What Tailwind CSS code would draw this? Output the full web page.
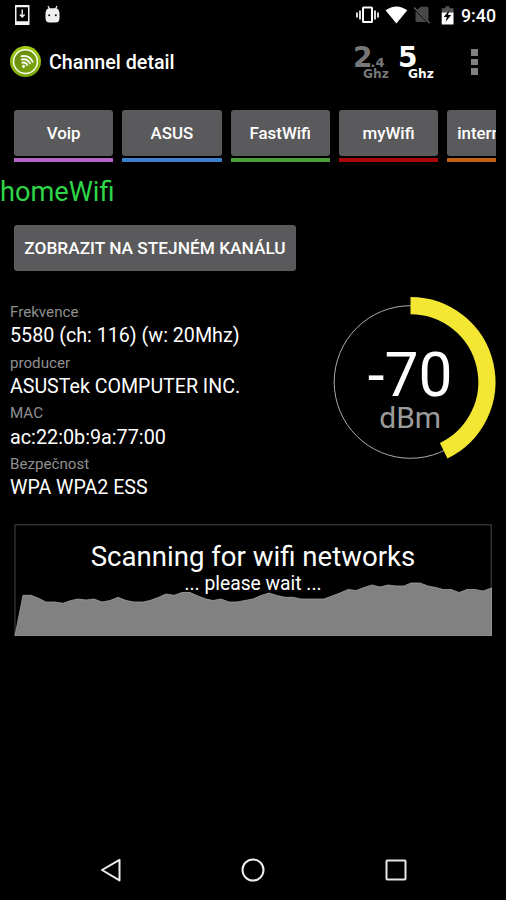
<!DOCTYPE html>
<html lang="cs">
<head>
<meta charset="utf-8">
<title>Channel detail</title>
<script src="https://cdn.jsdelivr.net/npm/@tailwindcss/browser@4"></script>
</head>
<body class="bg-black">
<div class="w-[506px] h-[900px] bg-black text-white font-[Roboto,sans-serif] flex flex-col overflow-hidden whitespace-nowrap">
  <!-- Status bar -->
  <header class="h-[30px] shrink-0 flex items-center justify-between pl-[15px] pr-[10px]">
    <div class="flex items-center gap-[15px]">
      <svg class="w-[15px] h-5" viewBox="0 0 15 20"><path fill="#f4f4f4" fill-rule="evenodd" d="M0 0h14.500v20H0zM1.500 2.200v14h11.500v-14z"/><path d="M7.200 4.500v7.500M4.800 9.500l2.400 2.500 2.400-2.500" fill="none" stroke="#f4f4f4" stroke-width="1.400"/></svg>
      <svg class="w-[15px] h-5 -mt-[3px]" viewBox="0 0 15 20"><path d="M3 2l1.500 3M12 2l-1.500 3" stroke="#f0f0f0" stroke-width="1.200"/><path fill="#f0f0f0" d="M.5 9Q1 4.300 4.500 4.300h6Q14 4.300 14.500 9v5q0 4.500-4 4.500h-6q-4 0-4-4.500z"/><circle cx="4.200" cy="11.200" r="1" fill="#111"/><circle cx="10.800" cy="11.200" r="1" fill="#111"/></svg>
    </div>
    <div class="flex items-center">
      <svg class="w-[23px] h-[18px]" viewBox="0 0 23 18"><path fill="none" stroke="#fff" stroke-width="1.700" d="M1 6.500v5M4 4.500v9M22 6.500v5M19 4.500v9"/><rect x="7" y="1.500" width="9" height="14.500" rx=".6" fill="none" stroke="#fff" stroke-width="2"/></svg>
      <svg class="w-[23px] h-[18px] ml-[6px]" viewBox="0 0 23 18"><path fill="#fff" d="M.5 4.200Q11.500-3.400 22.300 4.200L11.400 17.500z"/></svg>
      <svg class="w-[17px] h-[18px] ml-[6px]" viewBox="0 0 17 18"><path fill="#484848" d="M6.300.8h7q1.200 0 1.200 1.200v14H3q-1.500 0-1.500-1.500v-9z"/><path d="M.2 2.200L15.700 17.500" stroke="#000" stroke-width="2"/><path d="M-.3 1.200L15.700 17.200" stroke="#5c5c5c" stroke-width="1.300"/></svg>
      <svg class="w-[14px] h-[19px] ml-[10px]" viewBox="0 0 14 19"><path fill="#555" d="M4.500.3h4v1.900h4v4.600H.7V2.200h3.800z"/><path fill="#fff" d="M.7 6.500h11.800v12H.7z"/><path fill="#000" d="M8.200 4.200L2.700 11h3.100l-1.200 4.800L10.300 9H7.100z"/></svg>
      <div class="ml-[6px] pt-px text-[17.800px] leading-[30px] font-medium">9:40</div>
    </div>
  </header>

  <!-- Action bar -->
  <div class="h-[64px] shrink-0 flex items-center pl-[10px] pr-[28.500px]">
    <svg class="w-8 h-8" viewBox="0 0 32 32">
      <defs><linearGradient id="lime" x1="0" y1="0" x2="0" y2="1"><stop offset="0" stop-color="#a3cb16"/><stop offset="1" stop-color="#7ba50c"/></linearGradient><linearGradient id="leaf" x1="0" y1="0" x2="1" y2="1"><stop offset="0" stop-color="#66850f"/><stop offset="1" stop-color="#7ba80c"/></linearGradient></defs>
      <circle cx="15.500" cy="15.600" r="15.500" fill="url(#lime)"/>
      <circle cx="15.500" cy="15.600" r="11.900" fill="url(#leaf)" stroke="#fbfff0" stroke-width="1.500"/>
      <g transform="rotate(26 13.500 20.300)" fill="none" stroke="#f6faea" stroke-width="1.900" stroke-linecap="round"><path d="M10.900 17.600q2.700-2.300 5.400 0M9 14.900q4.500-3.700 9 0M7.300 12.200q6.200-4.800 12.400 0"/><circle cx="13.500" cy="20.300" r=".6" fill="#f6faea"/></g>
    </svg>
    <h1 class="ml-[7px] pt-[2px] text-[19.700px] font-medium leading-6">Channel detail</h1>
    <div class="ml-auto flex font-['DejaVu_Sans',sans-serif] font-bold">
      <div class="w-[45px] h-[38px] text-[#777]">
        <div class="h-[25px] pt-px flex items-baseline"><span class="text-[28px] leading-[28px]">2</span><span class="text-[13px] leading-[24px] -ml-[2px]">.4</span></div>
        <div class="pl-[10px] text-[12.200px] leading-[12px]">Ghz</div>
      </div>
      <div class="w-[45px] h-[38px]">
        <div class="h-[25px] pt-px flex items-baseline"><span class="text-[28px] leading-[28px]">5</span></div>
        <div class="pl-[10px] text-[12.200px] leading-[12px]">Ghz</div>
      </div>
    </div>
    <div class="ml-[28px] flex flex-col gap-[3px]">
      <i class="block w-[6.500px] h-[6.500px] bg-[#818181]"></i><i class="block w-[6.500px] h-[6.500px] bg-[#818181]"></i><i class="block w-[6.500px] h-[6.500px] bg-[#818181]"></i>
    </div>
  </div>

  <!-- Networks on the channel -->
  <nav class="mt-[16px] ml-[14px] mr-[10px] h-[52px] shrink-0 flex gap-[9px] overflow-hidden text-[16.900px] leading-[46px] font-medium text-center">
    <div class="w-[99.300px] shrink-0"><div class="h-[45.500px] rounded-[3px] bg-[#5a595b]">Voip</div><div class="mt-[2.500px] h-[4px] bg-[#b565c5]"></div></div>
    <div class="w-[99.300px] shrink-0"><div class="h-[45.500px] rounded-[3px] bg-[#5a595b]">ASUS</div><div class="mt-[2.500px] h-[4px] bg-[#3d7fd0]"></div></div>
    <div class="w-[99.300px] shrink-0"><div class="h-[45.500px] rounded-[3px] bg-[#5a595b]">FastWifi</div><div class="mt-[2.500px] h-[4px] bg-[#4ba03b]"></div></div>
    <div class="w-[99.300px] shrink-0"><div class="h-[45.500px] rounded-[3px] bg-[#5a595b]">myWifi</div><div class="mt-[2.500px] h-[4px] bg-[#ad050b]"></div></div>
    <div class="w-[99.300px] shrink-0"><div class="h-[45.500px] rounded-[3px] bg-[#5a595b] text-left pl-[10px]">internet</div><div class="mt-[2.500px] h-[4px] bg-[#c46012]"></div></div>
  </nav>

  <h2 class="mt-[11px] h-[38px] shrink-0 text-[27.200px] leading-[38px] text-[#2fd548]">homeWifi</h2>
  <button class="mt-[14px] ml-[14px] w-[282px] h-[46px] shrink-0 rounded-[3px] bg-[#5a595b] pt-[2px] text-[17.300px] font-medium">ZOBRAZIT NA STEJNÉM KANÁLU</button>

  <!-- Network details and signal gauge -->
  <main class="mt-[23px] h-[206px] shrink-0 flex justify-between pl-[10px]">
    <dl class="pt-[7px]">
      <dt class="text-[15.150px] leading-[22px] text-[#8f8f8f]">Frekvence</dt><dd class="text-[19.700px] leading-[26px] h-[28.600px]">5580 (ch: 116) (w: 20Mhz)</dd>
      <dt class="text-[15.150px] leading-[22px] text-[#8f8f8f]">producer</dt><dd class="text-[19.600px] leading-[26px] h-[28.600px]">ASUSTek COMPUTER INC.</dd>
      <dt class="text-[15.150px] leading-[22px] text-[#8f8f8f]">MAC</dt><dd class="text-[19.800px] leading-[27.200px] h-[28.600px]">ac:22:0b:9a:77:00</dd>
      <dt class="text-[15.150px] leading-[22px] text-[#8f8f8f]">Bezpečnost</dt><dd class="text-[19.600px] leading-[26px] h-[28.600px]">WPA WPA2 ESS</dd>
    </dl>
    <svg class="w-[186px] h-[180px]" viewBox="320 294 186 180">
      <circle cx="410.500" cy="382" r="76.300" fill="none" stroke="#aaa" stroke-width="1"/>
      <path d="M410.500 305.600A76.400 76.400 0 0 1 443.700 450.800" fill="none" stroke="#f3e733" stroke-width="17.200"/>
      <text x="410.200" y="395.500" text-anchor="middle" font-size="60.500" fill="#fff">-70</text>
      <text x="410.200" y="427.500" text-anchor="middle" font-size="30" fill="#9b9b9b">dBm</text>
    </svg>
  </main>

  <!-- Signal history -->
  <section class="mt-[24px] ml-[14px] w-[478px] h-[112px] shrink-0">
    <svg class="w-[478px] h-[112px]" viewBox="14 524 478 112">
      <path d="M15 636V524.700H491.300V636" fill="none" stroke="#303030" stroke-width="1.500"/>
      <path d="M15 635.700L23 595.300H31L39 598.500 46 602H55L63 603.300 71 600.500 78 599 86 600 94 599 102 602 110 600.500 118 597.300 126 600.500 134 602H143L150 600.500 158 597.500 166 594 174 595.300 182 592.500H190L198 596 206 599 213 600.500 221 599 229 602H237L245 600.500 253 599 261 595.500 269 593 277 595.500 285 597.300H293L301 599H324L332 596 340 593 348 589.500 356 590.500 364 587.500 372 585 380 587 388 585 396 586H404L411 583H420L428 586 436 587.500 443 589.500H451L459 592.500 467 589.500H475L483 591 491.500 588V635.700z" fill="#818181" stroke="#a0a0a0" stroke-width=".8"/>
      <text x="253" y="566" text-anchor="middle" font-size="27.600" fill="#fff">Scanning for wifi networks</text>
      <text x="253" y="589.500" text-anchor="middle" font-size="19.300" fill="#fff">... please wait ...</text>
    </svg>
  </section>

  <!-- Navigation bar -->
  <footer class="mt-auto h-[60px] shrink-0 flex items-center justify-between pl-[99.500px] pr-[99.500px]">
    <svg class="w-[22px] h-6" viewBox="0 0 22 24"><path d="M2 12L19.500 1.800v20.600z" fill="none" stroke="#eee" stroke-width="2" stroke-linejoin="round"/></svg>
    <svg class="w-6 h-6" viewBox="0 0 24 24"><circle cx="12" cy="12" r="10.500" fill="none" stroke="#eee" stroke-width="2"/></svg>
    <svg class="w-[22px] h-[22px]" viewBox="0 0 22 22"><rect x="1.500" y="1.500" width="19" height="19" rx=".8" fill="none" stroke="#e6e6e6" stroke-width="2"/></svg>
  </footer>
</div>
</body>
</html>
